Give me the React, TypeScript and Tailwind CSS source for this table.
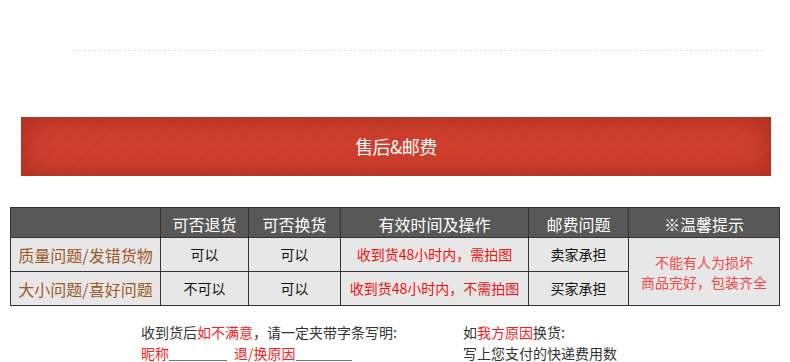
export default function App() {
  const font = { fontFamily: '"Noto Sans CJK SC", "Noto Sans", sans-serif' };
  const head = "h-[30px] border border-[#333] bg-[#585858] pt-[3px] text-center text-[16px] font-normal text-white";
  const cell = "h-[34px] border border-[#333] bg-[#e7e7e7] text-center text-[14px]";

  return (
    <div className="relative h-[362px] w-[790px] overflow-hidden bg-white" style={font}>
      <div className="pt-[50px]">
        <div className="ml-[73px] w-[690px] border-t border-dashed border-[#e4e4e4]" />
      </div>

      {/* banner */}
      <div className="mt-[66px] ml-[21px] flex h-[59px] w-[750px] items-center justify-center bg-[#d3412f] bg-[repeating-linear-gradient(135deg,rgba(0,0,0,0.05)_0px,rgba(0,0,0,0.05)_1px,transparent_1px,transparent_3px)] shadow-[inset_0_0_28px_rgba(110,20,10,0.45)]">
        <span className="text-[18px] tracking-[-0.5px] text-white">售后&amp;邮费</span>
      </div>

      {/* table */}
      <table className="mt-[31px] ml-[10px] w-[769px] table-fixed border-collapse">
        <colgroup>
          <col className="w-[150px]" />
          <col className="w-[88px]" />
          <col className="w-[92px]" />
          <col className="w-[188px]" />
          <col className="w-[100px]" />
          <col className="w-[151px]" />
        </colgroup>
        <thead>
          <tr>
            <th className={head}></th>
            <th className={head}>可否退货</th>
            <th className={head}>可否换货</th>
            <th className={head}>有效时间及操作</th>
            <th className={head}>邮费问题</th>
            <th className={head}>※温馨提示</th>
          </tr>
        </thead>
        <tbody>
          <tr>
            <td className={`${cell} text-[16px] text-[#9c5a28]`}>质量问题/发错货物</td>
            <td className={`${cell} text-[#111]`}>可以</td>
            <td className={`${cell} text-[#111]`}>可以</td>
            <td className={`${cell} text-[#f01010]`}>收到货48小时内，需拍图</td>
            <td className={`${cell} text-[#111]`}>卖家承担</td>
            <td rowSpan={2} className={`${cell} text-[12.5px] leading-[20px] text-[#f04848]`}>
              不能有人为损坏
              <br />
              商品完好，包装齐全
            </td>
          </tr>
          <tr>
            <td className={`${cell} text-[16px] text-[#9c5a28]`}>大小问题/喜好问题</td>
            <td className={`${cell} text-[#111]`}>不可以</td>
            <td className={`${cell} text-[#111]`}>可以</td>
            <td className={`${cell} text-[#f01010]`}>收到货48小时内，不需拍图</td>
            <td className={`${cell} text-[#111]`}>买家承担</td>
          </tr>
        </tbody>
      </table>

      {/* notes */}
      <div className="mt-[16px] flex text-[14px] leading-[21px] text-[#333]">
        <div className="ml-[141px] w-[322px]">
          <div>
            收到货后<span className="text-[#f51d1d]">如不满意</span>，请一定夹带字条写明:
          </div>
          <div className="flex">
            <span className="text-[#f51d1d]">昵称</span>
            <span className="mb-[3px] w-[58px] border-b border-[#777]" />
            <span className="ml-[7px] text-[#f51d1d]">退/换原因</span>
            <span className="mb-[3px] w-[56px] border-b border-[#777]" />
          </div>
        </div>
        <div>
          <div>
            如<span className="text-[#f51d1d]">我方原因</span>换货:
          </div>
          <div>写上您支付的快递费用数</div>
        </div>
      </div>
    </div>
  );
}
